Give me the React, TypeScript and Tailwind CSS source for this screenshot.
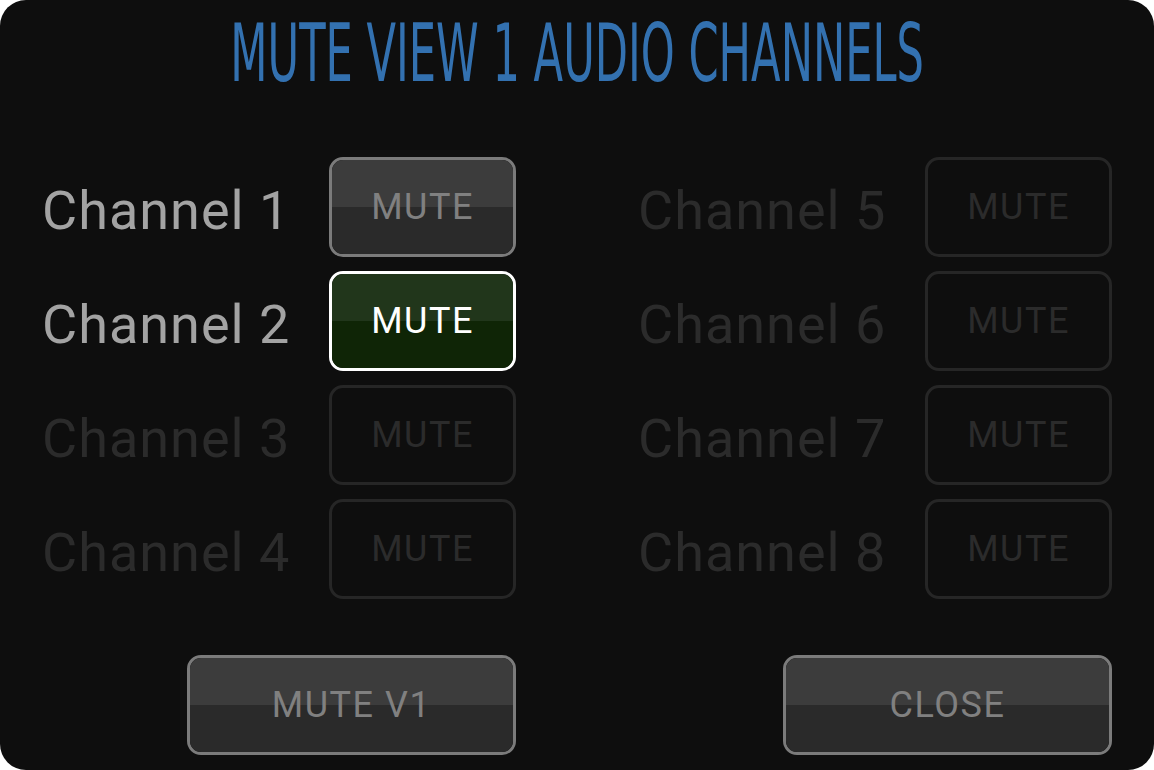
import React from 'react';

type ChannelState = 'on' | 'muted' | 'off';

interface Channel {
  label: string;
  state: ChannelState;
}

const left: Channel[] = [
  { label: 'Channel 1', state: 'on' },
  { label: 'Channel 2', state: 'muted' },
  { label: 'Channel 3', state: 'off' },
  { label: 'Channel 4', state: 'off' },
];

const right: Channel[] = [
  { label: 'Channel 5', state: 'off' },
  { label: 'Channel 6', state: 'off' },
  { label: 'Channel 7', state: 'off' },
  { label: 'Channel 8', state: 'off' },
];

const font = { fontFamily: 'Roboto, "Liberation Sans", sans-serif' };

function GlossButton({ label, wide }: { label: string; wide?: boolean }) {
  return (
    <button
      className={`relative flex ${wide ? 'w-[329px]' : 'w-[187px]'} h-[100px] flex-col overflow-hidden rounded-[14px] border-[3px] border-[#7b7b7b]`}
    >
      <div className="h-1/2 w-full bg-[#3c3c3c]" />
      <div className="h-1/2 w-full bg-[#2a2a2a]" />
      <span className="absolute inset-0 flex items-center justify-center text-[36px] tracking-[1.5px] text-[#808080]">
        {label}
      </span>
    </button>
  );
}

function MuteButton({ state }: { state: ChannelState }) {
  if (state === 'on') return <GlossButton label="MUTE" />;
  if (state === 'muted') {
    return (
      <button className="relative flex h-[100px] w-[187px] flex-col overflow-hidden rounded-[14px] border-[3px] border-white">
        <div className="h-1/2 w-full bg-[#21361b]" />
        <div className="h-1/2 w-full bg-[#0f2506]" />
        <span className="absolute inset-0 flex items-center justify-center text-[36px] tracking-[1.5px] text-white">
          MUTE
        </span>
      </button>
    );
  }
  return (
    <button className="flex h-[100px] w-[187px] items-center justify-center rounded-[14px] border-[3px] border-[#262626] text-[36px] tracking-[1.5px] text-[#2b2b2b]">
      MUTE
    </button>
  );
}

function ChannelColumn({ items }: { items: Channel[] }) {
  return (
    <div className="flex flex-col gap-[14px]">
      {items.map(ch => (
        <div key={ch.label} className="flex items-center">
          <span
            className={`w-[287px] pt-[6px] text-[54px] tracking-[1px] ${ch.state === 'off' ? 'text-[#2b2b2b]' : 'text-[#a3a3a3]'}`}
          >
            {ch.label}
          </span>
          <MuteButton state={ch.state} />
        </div>
      ))}
    </div>
  );
}

export default function App() {
  return (
    <div className="h-[770px] w-[1154px] bg-white" style={font}>
      <div className="flex h-full w-full flex-col rounded-[26px] bg-[#0e0e0e]">
        <div className="flex h-[157px] justify-center">
          <h1
            className="mt-[6px] origin-top scale-x-[0.6] whitespace-nowrap text-[80px] leading-[96px] text-[#3371b0]"
            style={{ fontFamily: '"DejaVu Sans Condensed", "DejaVu Sans", sans-serif' }}
          >
            MUTE VIEW 1 AUDIO CHANNELS
          </h1>
        </div>
        <div className="flex gap-[122px] pl-[42px]">
          <ChannelColumn items={left} />
          <ChannelColumn items={right} />
        </div>
        <div className="mt-[56px] flex pl-[187px]">
          <GlossButton label="MUTE V1" wide />
          <div className="ml-[267px]">
            <GlossButton label="CLOSE" wide />
          </div>
        </div>
      </div>
    </div>
  );
}
